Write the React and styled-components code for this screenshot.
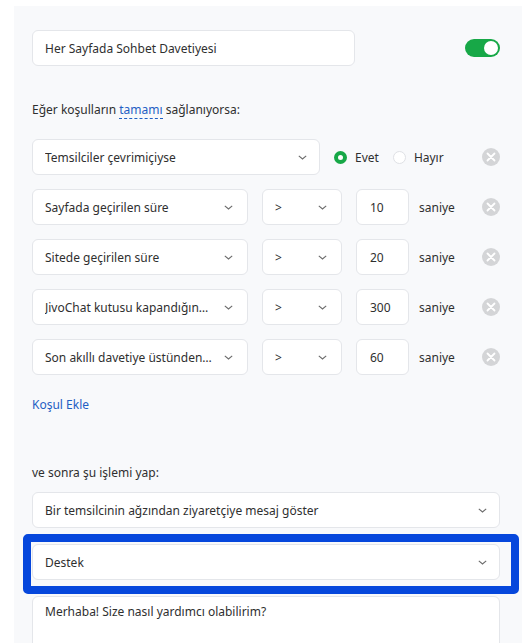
import React from "react";
import styled, { createGlobalStyle } from "styled-components";

const GlobalStyle = createGlobalStyle`
  body {
    margin: 0;
    background: #ffffff;
    font-family: "Noto Sans", "Open Sans", sans-serif;
    color: #2f2f2f;
  }
`;

const Panel = styled.div`
  margin: 6px 10px 0 14px;
  padding: 24px 22px 0 18px;
  background: #f8f9fb;
  min-height: 637px;
  box-sizing: border-box;
`;

const TopRow = styled.div`
  display: flex;
  align-items: center;
  justify-content: space-between;
`;

const Field = styled.div`
  display: flex;
  align-items: center;
  gap: 10px;
  box-sizing: border-box;
  height: 36px;
  width: ${(p) => p.$w || "100%"};
  flex: none;
  padding: 0 ${(p) => p.$pr || 12}px 0 ${(p) => p.$pl || 12}px;
  background: #ffffff;
  border: 1px solid #e4e6ea;
  border-radius: 6px;
  font-size: 12px;
  white-space: nowrap;
  overflow: hidden;
`;

const FieldText = styled.span`
  flex: 1;
  min-width: 0;
  overflow: hidden;
  text-overflow: ellipsis;
`;

const Toggle = styled.div`
  width: 35px;
  height: 18px;
  border-radius: 9px;
  background: #17a847;
  display: flex;
  align-items: center;
  justify-content: flex-end;
  padding: 0 2px;
  box-sizing: border-box;
  &::after {
    content: "";
    width: 14px;
    height: 14px;
    border-radius: 50%;
    background: #ffffff;
  }
`;

const Label = styled.div`
  font-size: 12px;
  line-height: 18px;
  margin-top: ${(p) => p.$mt}px;
`;

const DashedLink = styled.span`
  color: #1f5fc4;
  border-bottom: 1px dashed #1f5fc4;
`;

const Conditions = styled.div`
  display: flex;
  flex-direction: column;
  gap: 14px;
  margin-top: 20px;
`;

const Row = styled.div`
  display: flex;
  align-items: center;
  gap: 14px;
`;

const Radio = styled.label`
  display: flex;
  align-items: center;
  gap: 8px;
  font-size: 12px;
  &::before {
    content: "";
    width: 13px;
    height: 13px;
    box-sizing: border-box;
    border-radius: 50%;
    background: #ffffff;
    border: ${(p) => (p.$on ? "4px solid #17a847" : "1px solid #dfe1e5")};
  }
`;

const Unit = styled.span`
  font-size: 12px;
  margin-left: -4px;
`;

const Remove = styled.div`
  margin-left: auto;
  width: 18px;
  height: 18px;
  border-radius: 50%;
  background: #d4d5d7;
  display: flex;
  align-items: center;
  justify-content: center;
`;

const AddLink = styled.div`
  color: #1f5fc4;
  font-size: 12px;
  line-height: 18px;
  margin-top: 21px;
`;

const Actions = styled.div`
  display: flex;
  flex-direction: column;
  gap: 16px;
  margin-top: 10px;
`;

const Highlight = styled.div`
  position: relative;
  &::after {
    content: "";
    position: absolute;
    top: -10px;
    left: -9px;
    right: -19px;
    bottom: -14px;
    border: 8px solid #0647dc;
    border-radius: 5px;
    pointer-events: none;
  }
`;

const TextArea = styled.div`
  box-sizing: border-box;
  height: 60px;
  padding: 6px 12px;
  background: #ffffff;
  border: 1px solid #e4e6ea;
  border-radius: 6px;
  font-size: 12px;
  line-height: 18px;
`;

const Chevron = () => (
  <svg width="9" height="5" viewBox="0 0 9 5" fill="none">
    <path d="M0.8 0.8 L4.5 4 L8.2 0.8" stroke="#6b6b6b" strokeWidth="1.1" />
  </svg>
);

const Cross = () => (
  <svg width="10" height="10" viewBox="0 0 10 10">
    <path d="M1.5 1.5 L8.5 8.5 M8.5 1.5 L1.5 8.5" stroke="#ffffff" strokeWidth="1.8" strokeLinecap="round" />
  </svg>
);

const Select = ({ children, w, pr }) => (
  <Field $w={w} $pr={pr || 12}>
    <FieldText>{children}</FieldText>
    <Chevron />
  </Field>
);

const timeRows = [
  ["Sayfada geçirilen süre", "10"],
  ["Sitede geçirilen süre", "20"],
  ["JivoChat kutusu kapandığından beri geçen süre", "300"],
  ["Son akıllı davetiye üstünden geçen süre", "60"],
];

export default function App() {
  return (
    <>
      <GlobalStyle />
      <Panel>
        <TopRow>
          <Field $w="323px">Her Sayfada Sohbet Davetiyesi</Field>
          <Toggle />
        </TopRow>

        <Label $mt={35}>
          Eğer koşulların <DashedLink>tamamı</DashedLink> sağlanıyorsa:
        </Label>

        <Conditions>
          <Row>
            <Select w="288px">Temsilciler çevrimiçiyse</Select>
            <Radio $on>Evet</Radio>
            <Radio>Hayır</Radio>
            <Remove>
              <Cross />
            </Remove>
          </Row>
          {timeRows.map(([name, value]) => (
            <Row key={name}>
              <Select w="216px" pr={14}>
                {name}
              </Select>
              <Select w="80px" pr={14}>
                &gt;
              </Select>
              <Field $w="53px" $pl={13}>
                {value}
              </Field>
              <Unit>saniye</Unit>
              <Remove>
                <Cross />
              </Remove>
            </Row>
          ))}
        </Conditions>

        <AddLink>Koşul Ekle</AddLink>

        <Label $mt={50}>ve sonra şu işlemi yap:</Label>

        <Actions>
          <Select>Bir temsilcinin ağzından ziyaretçiye mesaj göster</Select>
          <Highlight>
            <Select>Destek</Select>
          </Highlight>
          <TextArea>Merhaba! Size nasıl yardımcı olabilirim?</TextArea>
        </Actions>
      </Panel>
    </>
  );
}
